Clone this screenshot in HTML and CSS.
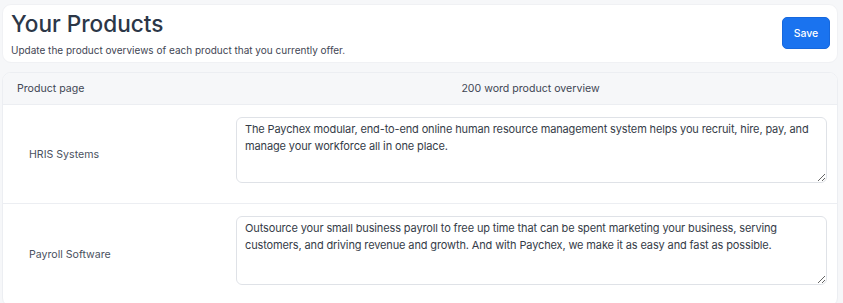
FILE: index.html
```html
<!DOCTYPE html>
<html>
<head>
<meta charset="utf-8">
<link rel="stylesheet" href="styles.css">
</head>
<body>
<div class="page">
  <header class="head-card">
    <div class="head-text">
      <h1 class="title">Your Products</h1>
      <p class="subtitle">Update the product overviews of each product that you currently offer.</p>
    </div>
    <button class="save-btn">Save</button>
  </header>
  <section class="table-card">
    <div class="row head-row">
      <div class="col-name">Product page</div>
      <div class="col-text col-head">200 word product overview</div>
    </div>
    <div class="row body-row">
      <div class="col-name label">HRIS Systems</div>
      <div class="col-text"><textarea class="overview">The Paychex modular, end-to-end online human resource management system helps you recruit, hire, pay, and manage your workforce all in one place.</textarea></div>
    </div>
    <div class="row body-row">
      <div class="col-name label">Payroll Software</div>
      <div class="col-text"><textarea class="overview tall">Outsource your small business payroll to free up time that can be spent marketing your business, serving customers, and driving revenue and growth. And with Paychex, we make it as easy and fast as possible.</textarea></div>
    </div>
  </section>
</div>
</body>
</html>
```

FILE: styles.css
```css
* { box-sizing: border-box; }
html, body { margin: 0; padding: 0; }
body {
  background: #f6f7f9;
  font-family: Inter, "Noto Sans", sans-serif;
  color: #3f4654;
  height: 303px;
  overflow: hidden;
}
.page {
  padding: 4px 5px 0 2px;
  display: flex;
  flex-direction: column;
  gap: 9px;
}
.head-card {
  background: #fff;
  border-radius: 9px;
  display: flex;
  justify-content: space-between;
  align-items: center;
  padding: 6px 7px 8px 8px;
  height: 59px;
  border: 1px solid #f0f1f4;
}
.title {
  margin: 0;
  font-size: 22.6px;
  font-weight: 500;
  color: #2c3748;
  line-height: 30px;
}
.subtitle {
  margin: 4px 0 0 0;
  font-size: 10px;
  color: #3f4654;
  line-height: 14px;
}
.save-btn {
  background: #1a73ef;
  color: #fff;
  border: 1px solid #1668dd;
  border-radius: 5px;
  font-family: Inter, sans-serif;
  font-size: 10.5px;
  font-weight: 500;
  width: 48px;
  height: 32px;
  padding: 0;
  margin: 1px 0 0 0;
}
.table-card {
  background: #fff;
  border: 1px solid #eceef2;
  border-radius: 9px;
  overflow: hidden;
}
.row {
  display: grid;
  grid-template-columns: 221px 1fr;
  border-bottom: 1px solid #eceef2;
}
.head-row {
  background: #f6f7f9;
  height: 32px;
  align-items: center;
  font-size: 10.6px;
  color: #3f4654;
}
.head-row .col-name { padding-left: 14px; }
.col-head { text-align: center; }
.body-row {
  align-items: center;
}
.label {
  padding-left: 26px;
  font-size: 10.6px;
  color: #4a5160;
}
.col-text {
  padding: 12px 10px 20px 12px;
}
.col-head.col-text { padding: 0; }
.overview {
  display: block;
  width: 100%;
  height: 66px;
  border: 1px solid #dfe2e7;
  border-radius: 6px;
  padding: 3px 8px;
  font-family: Inter, sans-serif;
  font-size: 11px;
  letter-spacing: -0.13px;
  line-height: 17px;
  color: #353c48;
  resize: vertical;
  background: #fff;
}
.overview.tall { height: 69px; }
```
